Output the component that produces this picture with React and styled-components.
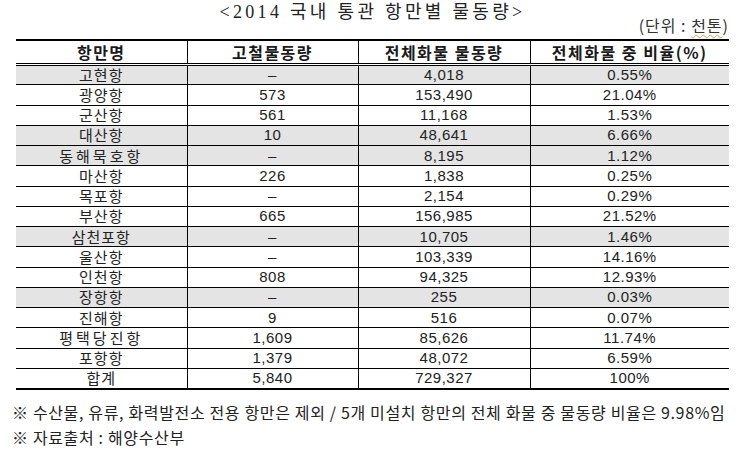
import React from "react";
import styled, { createGlobalStyle } from "styled-components";

const GlobalStyle = createGlobalStyle`
  html, body {
    margin: 0;
    padding: 0;
    background: #ffffff;
  }
`;

const Page = styled.div`
  width: 745px;
  height: 451px;
  box-sizing: border-box;
  padding: 2px 16px 0 16px;
  display: flex;
  flex-direction: column;
  color: #1a1a1a;
  font-family: "Noto Sans CJK KR", "Noto Sans", sans-serif;
  overflow: hidden;
`;

const Title = styled.div`
  text-align: center;
  font-family: "Liberation Serif", "Noto Sans CJK KR", serif;
  font-size: 18px;
  line-height: 20px;
  letter-spacing: 3.3px;
  color: #222;
`;

const Unit = styled.div`
  margin-top: -6px;
  text-align: right;
  font-size: 16px;
  line-height: 18px;
  letter-spacing: 1px;
  color: #333;
`;

const Squiggle = styled.span`
  text-decoration: underline wavy #e0a040;
  text-decoration-thickness: 1px;
  text-underline-offset: 2px;
`;

const Table = styled.table`
  margin-top: 5px;
  width: 713px;
  table-layout: fixed;
  border-collapse: collapse;
  border-top: 2px solid #000;
  border-bottom: 2px solid #000;
`;

const HeadCell = styled.th`
  height: 22px;
  padding: 0;
  font-size: 16px;
  font-weight: 700;
  line-height: 20px;
  letter-spacing: 1.5px;
  text-align: center;
  border-bottom: 3px double #000;
  border-left: ${(p) => (p.first ? "none" : "1px solid #000")};
`;

const Row = styled.tr`
  height: 20.25px;
  background: ${(p) => (p.shaded ? "#e4e4e4" : "#ffffff")};
`;

const Cell = styled.td`
  padding: 0;
  text-align: center;
  line-height: 18px;
  font-size: 15px;
  border-bottom: 1px solid #000;
  border-left: ${(p) => (p.first ? "none" : "1px solid #000")};
  font-family: ${(p) =>
    p.num
      ? '"Liberation Sans", "Noto Sans CJK KR", sans-serif'
      : '"Noto Sans CJK KR", sans-serif'};
  letter-spacing: ${(p) => (p.wide ? "3px" : p.num ? "0.5px" : "1px")};
  color: #222;
`;

const Notes = styled.div`
  margin: 10px -4px 0 -4px;
  font-size: 16px;
  line-height: 25px;
  letter-spacing: 0.65px;
  color: #222;
  white-space: nowrap;
`;

const rows = [
  ["고현항", "–", "4,018", "0.55%", true],
  ["광양항", "573", "153,490", "21.04%"],
  ["군산항", "561", "11,168", "1.53%"],
  ["대산항", "10", "48,641", "6.66%", true],
  ["동해묵호항", "–", "8,195", "1.12%", true],
  ["마산항", "226", "1,838", "0.25%"],
  ["목포항", "–", "2,154", "0.29%"],
  ["부산항", "665", "156,985", "21.52%"],
  ["삼천포항", "–", "10,705", "1.46%", true],
  ["울산항", "–", "103,339", "14.16%"],
  ["인천항", "808", "94,325", "12.93%"],
  ["장항항", "–", "255", "0.03%", true],
  ["진해항", "9", "516", "0.07%"],
  ["평택당진항", "1,609", "85,626", "11.74%"],
  ["포항항", "1,379", "48,072", "6.59%"],
  ["합계", "5,840", "729,327", "100%"],
];

const App = () => {
  return (
    <Page>
      <GlobalStyle />
      <Title>&lt;2014 국내 통관 항만별 물동량&gt;</Title>
      <Unit>
        (단위 : <Squiggle>천톤</Squiggle>)
      </Unit>
      <Table>
        <colgroup>
          <col style={{ width: 171 }} />
          <col style={{ width: 171 }} />
          <col style={{ width: 172 }} />
          <col style={{ width: 199 }} />
        </colgroup>
        <thead>
          <tr>
            <HeadCell first>항만명</HeadCell>
            <HeadCell>고철물동량</HeadCell>
            <HeadCell>전체화물 물동량</HeadCell>
            <HeadCell>전체화물 중 비율(%)</HeadCell>
          </tr>
        </thead>
        <tbody>
          {rows.map(([name, scrap, total, ratio, shaded]) => (
            <Row key={name} shaded={shaded}>
              <Cell first wide={name.length > 4}>
                {name}
              </Cell>
              <Cell num>{scrap}</Cell>
              <Cell num>{total}</Cell>
              <Cell num>{ratio}</Cell>
            </Row>
          ))}
        </tbody>
      </Table>
      <Notes>
        <div>
          ※ 수산물, 유류, 화력발전소 전용 항만은 제외 / 5개 미설치 항만의 전체 화물 중
          물동량 비율은 9.98%임
        </div>
        <div>※ 자료출처 : 해양수산부</div>
      </Notes>
    </Page>
  );
};

export default App;
